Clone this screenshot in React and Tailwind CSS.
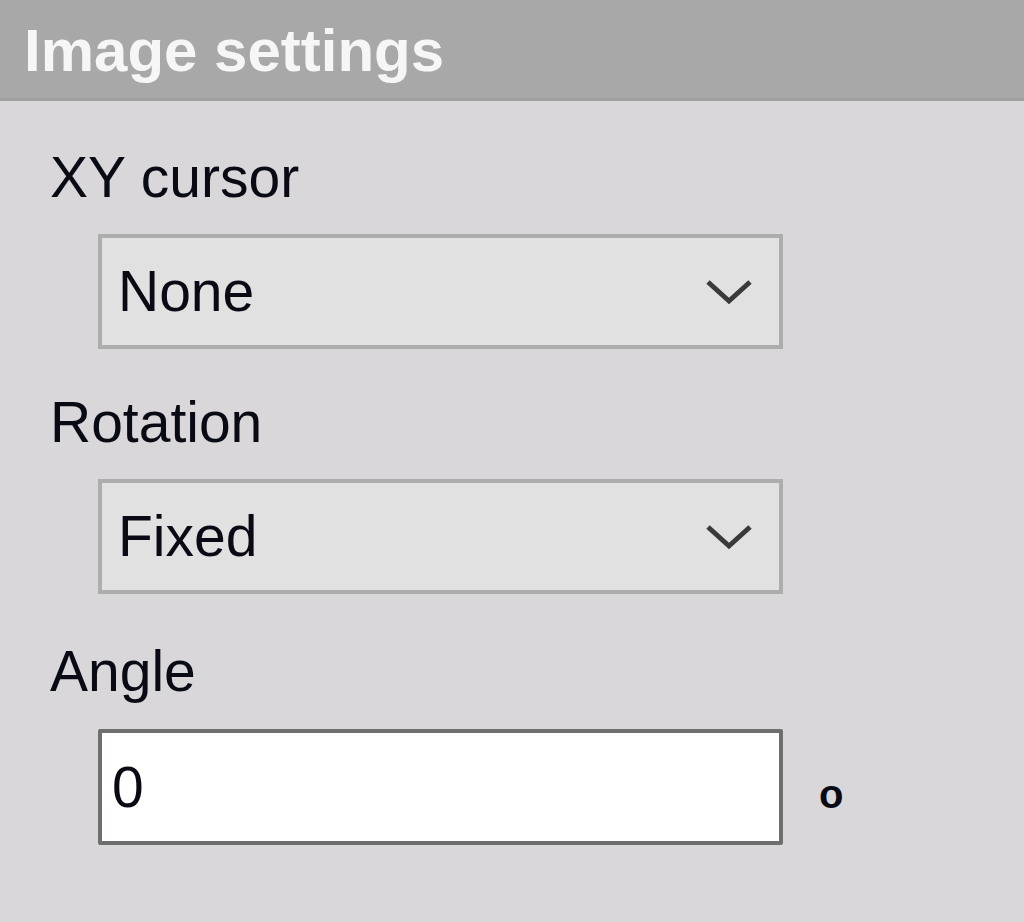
const font = { fontFamily: '"Liberation Sans", Arial, sans-serif' };

function Chevron() {
  return (
    <svg width="48" height="28" viewBox="0 0 48 28" className="shrink-0">
      <path d="M3 4 L24 23 L45 4" fill="none" stroke="#3a3a3a" strokeWidth="5" />
    </svg>
  );
}

function Select({ value }) {
  return (
    <div className="ml-[48px] flex h-[115px] w-[685px] items-center justify-between border-[4px] border-[#adadad] bg-[#e1e1e1] pl-[16px] pr-[26px]">
      <span className="text-[57px] leading-none text-[#0a0a14]">{value}</span>
      <Chevron />
    </div>
  );
}

export default function App() {
  return (
    <div className="h-[922px] w-[1024px] overflow-hidden bg-[#d9d7da]" style={font}>
      <div className="flex h-[101px] items-center border-b-[3px] border-[#a0a0a0] bg-[#a8a8a8] pl-[24px]">
        <span className="mt-[4px] text-[60px] font-bold leading-none text-[#f6f6f6]">Image settings</span>
      </div>
      <div className="pl-[50px]">
        <div className="mt-[48px] text-[57px] leading-none text-[#0a0a14]">XY cursor</div>
        <div className="mt-[28px]">
          <Select value="None" />
        </div>
        <div className="mt-[45px] text-[57px] leading-none text-[#0a0a14]">Rotation</div>
        <div className="mt-[28px]">
          <Select value="Fixed" />
        </div>
        <div className="mt-[49px] text-[57px] leading-none text-[#0a0a14]">Angle</div>
        <div className="mt-[29px] flex items-center">
          <div className="ml-[48px] flex h-[116px] w-[685px] items-center rounded-[2px] border-[4px] border-[#6e6e6e] bg-white pl-[10px]">
            <span className="text-[57px] leading-none text-[#0a0a14]">0</span>
          </div>
          <span className="ml-[36px] mt-[14px] text-[40px] font-bold leading-none text-[#0a0a14]">o</span>
        </div>
      </div>
    </div>
  );
}
